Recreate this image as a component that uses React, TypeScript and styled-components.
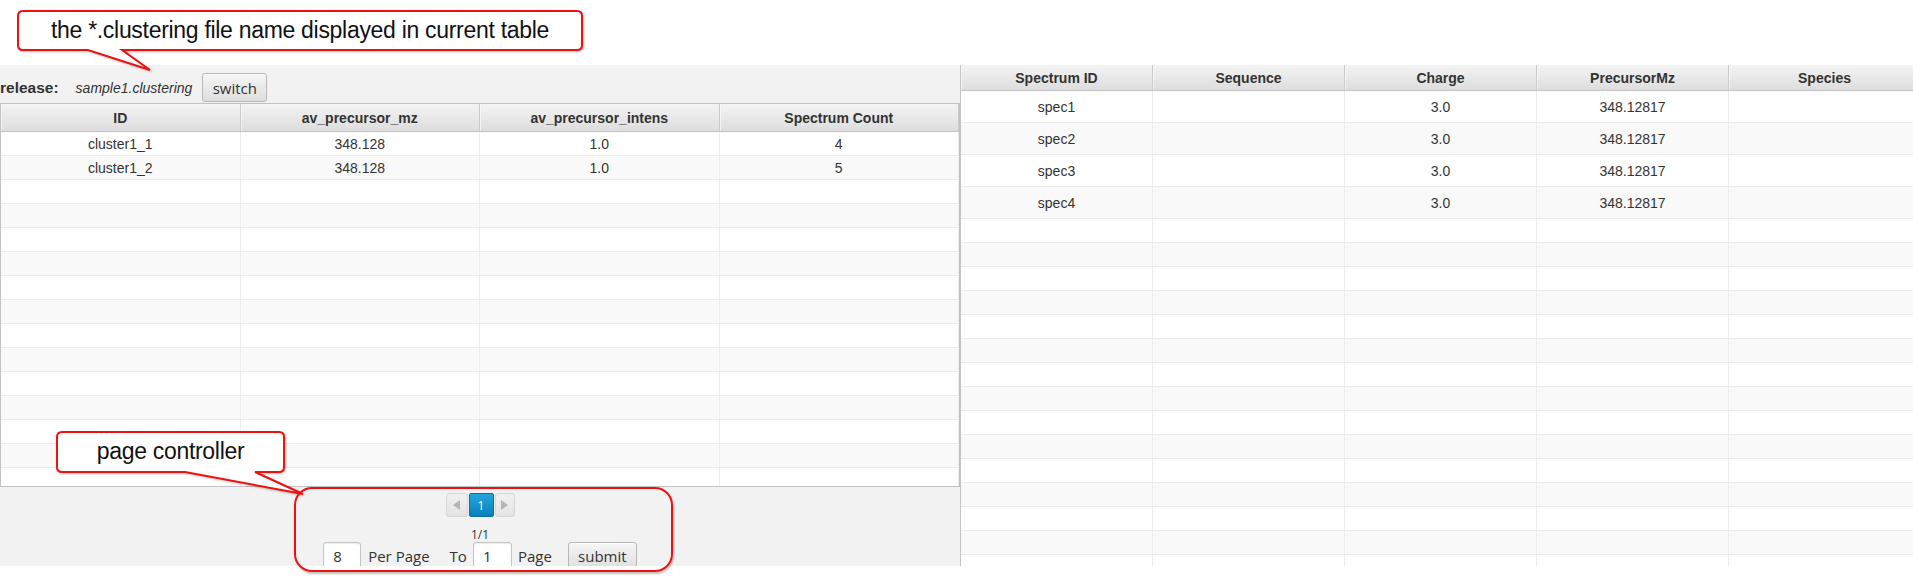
import React from "react";
import styled, { createGlobalStyle } from "styled-components";

const GlobalStyle = createGlobalStyle`
  html, body {
    margin: 0;
    padding: 0;
    background: #ffffff;
  }
  body {
    font-family: "Liberation Sans", Arial, sans-serif;
    color: #333333;
  }
  * { box-sizing: border-box; }
`;

const Page = styled.div`
  position: relative;
  width: 1913px;
  height: 579px;
  overflow: hidden;
  background: #ffffff;
`;

const TopSpace = styled.div`
  height: 65px;
`;

const Workspace = styled.main`
  display: flex;
  height: 501px;
  overflow: hidden;
`;

const LeftPanel = styled.section`
  flex: none;
  width: 960px;
  background: #f2f2f2;
  display: flex;
  flex-direction: column;
  overflow: hidden;
`;

const Toolbar = styled.div`
  display: flex;
  align-items: center;
  height: 29px;
  margin: 8px 0 1px 0;
`;

const ReleaseLabel = styled.span`
  font: bold 15.5px "Liberation Sans", Arial, sans-serif;
  color: #333;
  margin-right: 17px;
`;

const FileName = styled.span`
  font: italic 14px "Liberation Sans", Arial, sans-serif;
  color: #333;
  margin-right: 10px;
`;

const FxButton = styled.button<{ $w: number; $h: number }>`
  width: ${(p) => p.$w}px;
  height: ${(p) => p.$h}px;
  padding: 0;
  border: 1px solid #b7b7b7;
  border-radius: 3px;
  background: linear-gradient(#f6f6f6, #dedede);
  box-shadow: inset 0 1px 0 #ffffff;
  font: 15px "Open Sans", "Noto Sans", sans-serif;
  color: #333;
  display: flex;
  align-items: center;
  justify-content: center;
`;

const TableFrame = styled.div<{ $h: number; $bordered?: boolean }>`
  display: flex;
  flex-direction: column;
  height: ${(p) => p.$h}px;
  border: ${(p) => (p.$bordered ? "1px solid #c2c2c2" : "none")};
  background: #ffffff;
  overflow: hidden;
  flex: none;
`;

const HeaderRow = styled.div<{ $cols: string; $h: number }>`
  display: grid;
  grid-template-columns: ${(p) => p.$cols};
  flex: none;
  height: ${(p) => p.$h}px;
  background: linear-gradient(#f4f4f4, #dddddd);
  border-bottom: 1px solid #c4c4c4;
`;

const HeaderCell = styled.div`
  display: flex;
  align-items: center;
  justify-content: center;
  font: bold 14px "Liberation Sans", Arial, sans-serif;
  color: #333;
  border-right: 1px solid #cacaca;
  box-shadow: inset 1px 0 0 rgba(255, 255, 255, 0.6);
  white-space: nowrap;
`;

const Body = styled.div`
  flex: 1;
  overflow: hidden;
`;

const BodyRow = styled.div<{ $cols: string; $h: number; $odd: boolean }>`
  display: grid;
  grid-template-columns: ${(p) => p.$cols};
  height: ${(p) => p.$h}px;
  background: ${(p) => (p.$odd ? "#f9f9f9" : "#ffffff")};
  border-bottom: 1px solid #ebebeb;
`;

const Cell = styled.div`
  display: flex;
  align-items: center;
  justify-content: center;
  font: 14px "Liberation Sans", Arial, sans-serif;
  color: #333;
  border-right: 1px solid #ededed;
  white-space: nowrap;
`;

const Pagination = styled.div`
  display: flex;
  flex-direction: column;
  align-items: center;
  padding-top: 6px;
`;

const PageButtons = styled.div`
  display: flex;
  gap: 1px;
  height: 24px;
`;

const PageArrow = styled.div<{ $w: number }>`
  width: ${(p) => p.$w}px;
  height: 24px;
  border: 1px solid #d6d6d6;
  border-radius: 3px;
  background: linear-gradient(#f1f1f1, #e3e3e3);
  display: flex;
  align-items: center;
  justify-content: center;
`;

const PageNumber = styled.div`
  width: 25px;
  height: 24px;
  border: 1px solid #0b6ea0;
  border-radius: 2px;
  background: linear-gradient(#24a4dc, #0a80bb);
  color: #ffffff;
  font: 12px "Open Sans", "Noto Sans", sans-serif;
  display: flex;
  align-items: center;
  justify-content: center;
`;

const PageCount = styled.div`
  margin-top: 9px;
  height: 14px;
  line-height: 14px;
  font: 12px "Open Sans", "Noto Sans", sans-serif;
  color: #333;
`;

const Controls = styled.div`
  display: flex;
  align-items: center;
  gap: 6px;
  margin-top: 2px;
  height: 28px;
`;

const PageInput = styled.div<{ $w: number }>`
  width: ${(p) => p.$w}px;
  height: 28px;
  border: 1px solid #c4c4c4;
  border-radius: 3px;
  background: #ffffff;
  box-shadow: inset 0 1px 1px rgba(0, 0, 0, 0.08);
  padding-left: 9px;
  display: flex;
  align-items: center;
  font: 15px "Open Sans", "Noto Sans", sans-serif;
  color: #333;
`;

const ControlLabel = styled.span<{ $before?: number; $after?: number }>`
  font: 15px "Open Sans", "Noto Sans", sans-serif;
  color: #333;
  margin-left: ${(p) => p.$before ?? 0}px;
  margin-right: ${(p) => p.$after ?? 0}px;
  white-space: nowrap;
`;

const RightPanel = styled.section`
  flex: 1;
  min-width: 0;
  border-left: 1px solid #c4c4c4;
  background: #ffffff;
  overflow: hidden;
`;

const RightTableWrap = styled.div`
  width: 960px;
`;

const CalloutBox = styled.div<{ $left: number; $top: number; $w: number; $h: number }>`
  position: absolute;
  left: ${(p) => p.$left}px;
  top: ${(p) => p.$top}px;
  width: ${(p) => p.$w}px;
  height: ${(p) => p.$h}px;
  display: flex;
  align-items: center;
  justify-content: center;
  pointer-events: none;
`;

const CalloutShape = styled.svg`
  position: absolute;
  left: 0;
  top: 0;
  overflow: visible;
  filter: drop-shadow(1px 1px 1px rgba(0, 0, 0, 0.25));
`;

const CalloutText = styled.span`
  position: relative;
  font: 23px "Liberation Sans", Arial, sans-serif;
  letter-spacing: -0.3px;
  color: #111;
  white-space: nowrap;
  margin-top: -1px;
`;

const Highlight = styled.div`
  position: absolute;
  left: 294px;
  top: 487px;
  width: 379px;
  height: 85px;
  border: 2px solid #ee1111;
  border-radius: 18px;
  box-shadow: 1px 2px 2px rgba(0, 0, 0, 0.25);
  pointer-events: none;
`;

type CalloutProps = {
  left: number;
  top: number;
  w: number;
  h: number;
  a: number;
  b: number;
  tx: number;
  ty: number;
  text: string;
};

function Callout({ left, top, w, h, a, b, tx, ty, text }: CalloutProps) {
  const r = 5;
  const W = w - 1;
  const H = h - 1;
  const d = `M ${1 + r} 1 H ${W - r} Q ${W} 1 ${W} ${1 + r} V ${H - r} Q ${W} ${H} ${W - r} ${H} H ${b} L ${tx} ${ty} L ${a} ${H} H ${1 + r} Q 1 ${H} 1 ${H - r} V ${1 + r} Q 1 1 ${1 + r} 1 Z`;
  return (
    <CalloutBox $left={left} $top={top} $w={w} $h={h}>
      <CalloutShape width={w} height={Math.max(h, ty + 2)} viewBox={`0 0 ${w} ${Math.max(h, ty + 2)}`}>
        <path d={d} fill="#ffffff" stroke="#ee1111" strokeWidth={2} strokeLinejoin="miter" />
      </CalloutShape>
      <CalloutText>{text}</CalloutText>
    </CalloutBox>
  );
}

function Arrow({ dir }: { dir: "left" | "right" }) {
  return (
    <svg width="7" height="10" viewBox="0 0 7 10">
      {dir === "left" ? (
        <polygon points="7,0 0,5 7,10" fill="#b4b4b4" />
      ) : (
        <polygon points="0,0 7,5 0,10" fill="#b4b4b4" />
      )}
    </svg>
  );
}

const leftCols = "repeat(4, 1fr)";
const leftHeaders = ["ID", "av_precursor_mz", "av_precursor_intens", "Spectrum Count"];
const clusters = [
  ["cluster1_1", "348.128", "1.0", "4"],
  ["cluster1_2", "348.128", "1.0", "5"],
];

const rightCols = "repeat(5, 192px)";
const rightHeaders = ["Spectrum ID", "Sequence", "Charge", "PrecursorMz", "Species"];
const spectra = [1, 2, 3, 4].map((i) => [`spec${i}`, "", "3.0", "348.12817", ""]);

export default function App() {
  const leftRows: string[][] = [...clusters];
  while (leftRows.length < 16) leftRows.push(["", "", "", ""]);
  const rightEmpty = Array.from({ length: 16 }, () => ["", "", "", "", ""]);

  return (
    <Page>
      <GlobalStyle />
      <TopSpace />
      <Workspace>
        <LeftPanel>
          <Toolbar>
            <ReleaseLabel>release:</ReleaseLabel>
            <FileName>sample1.clustering</FileName>
            <FxButton $w={65} $h={29}>switch</FxButton>
          </Toolbar>
          <TableFrame $h={384} $bordered>
            <HeaderRow $cols={leftCols} $h={28}>
              {leftHeaders.map((h) => (
                <HeaderCell key={h}>{h}</HeaderCell>
              ))}
            </HeaderRow>
            <Body>
              {leftRows.map((row, i) => (
                <BodyRow key={i} $cols={leftCols} $h={24} $odd={i % 2 === 1}>
                  {row.map((c, j) => (
                    <Cell key={j}>{c}</Cell>
                  ))}
                </BodyRow>
              ))}
            </Body>
          </TableFrame>
          <Pagination>
            <PageButtons>
              <PageArrow $w={22}>
                <Arrow dir="left" />
              </PageArrow>
              <PageNumber>1</PageNumber>
              <PageArrow $w={20}>
                <Arrow dir="right" />
              </PageArrow>
            </PageButtons>
            <PageCount>1/1</PageCount>
            <Controls>
              <PageInput $w={38}>8</PageInput>
              <ControlLabel $before={1} $after={14}>Per Page</ControlLabel>
              <ControlLabel>To</ControlLabel>
              <PageInput $w={39}>1</PageInput>
              <ControlLabel $after={10}>Page</ControlLabel>
              <FxButton $w={69} $h={28}>submit</FxButton>
            </Controls>
          </Pagination>
        </LeftPanel>
        <RightPanel>
          <RightTableWrap>
            <HeaderRow $cols={rightCols} $h={26}>
              {rightHeaders.map((h) => (
                <HeaderCell key={h}>{h}</HeaderCell>
              ))}
            </HeaderRow>
            {spectra.map((row, i) => (
              <BodyRow key={`s${i}`} $cols={rightCols} $h={32} $odd={i % 2 === 1}>
                {row.map((c, j) => (
                  <Cell key={j}>{c}</Cell>
                ))}
              </BodyRow>
            ))}
            {rightEmpty.map((row, i) => (
              <BodyRow key={`e${i}`} $cols={rightCols} $h={24} $odd={i % 2 === 1}>
                {row.map((c, j) => (
                  <Cell key={j}>{c}</Cell>
                ))}
              </BodyRow>
            ))}
          </RightTableWrap>
        </RightPanel>
      </Workspace>

      <Callout
        left={17}
        top={10}
        w={566}
        h={41}
        a={71}
        b={105}
        tx={133}
        ty={60}
        text="the *.clustering file name displayed in current table"
      />
      <Callout
        left={56}
        top={431}
        w={229}
        h={42}
        a={129}
        b={199}
        tx={247}
        ty={63}
        text="page controller"
      />
      <Highlight />
    </Page>
  );
}
